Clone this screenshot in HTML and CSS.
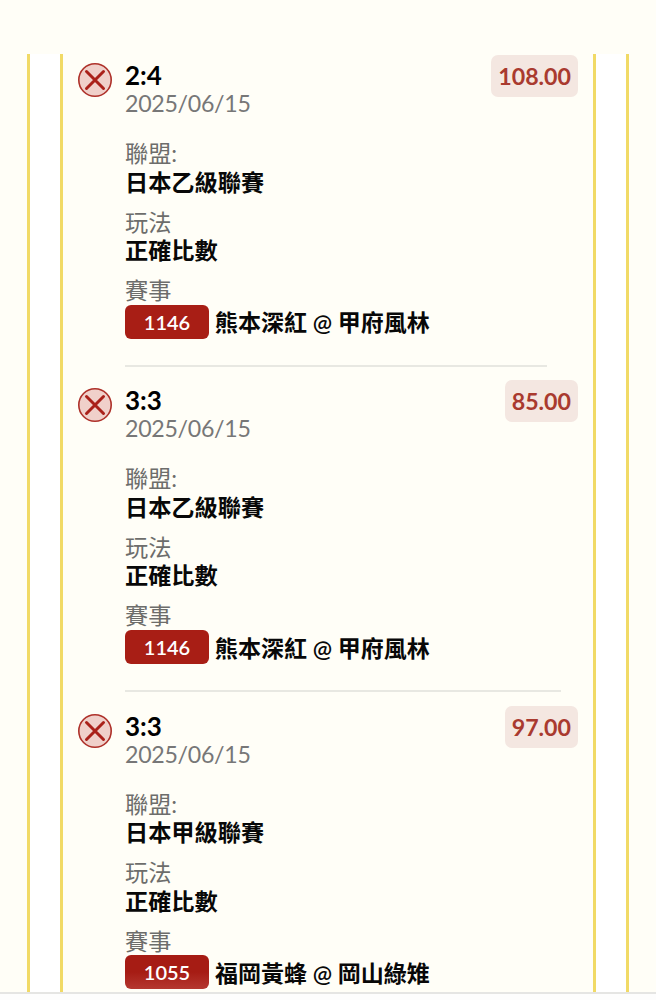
FILE: index.html
```
<!DOCTYPE html>
<html lang="zh-Hant">
<head>
    <meta charset="UTF-8">
    <meta name="viewport" content="width=device-width, initial-scale=1.0">
    <title>投注詳情</title>
    <link rel="stylesheet" href="styles.css">
</head>
<body>
    <div class="outer">
        <div class="inner">
            <div class="bet">
                <svg class="icon" viewBox="0 0 34 34"><circle cx="17" cy="17" r="16.2"/><path d="M8.5 8.5L25.5 25.5M25.5 8.5L8.5 25.5"/></svg>
                <div class="content">
                    <div class="score">2:4</div>
                    <div class="date">2025/06/15</div>
                    <div class="group">
                        <div class="label">聯盟:</div>
                        <div class="value">日本乙級聯賽</div>
                    </div>
                    <div class="group">
                        <div class="label">玩法</div>
                        <div class="value">正確比數</div>
                    </div>
                    <div class="group">
                        <div class="label">賽事</div>
                        <div class="match"><span class="tag">1146</span><span class="teams">熊本深紅 @ 甲府風林</span></div>
                    </div>
                    <div class="divider"></div>
                </div>
                <div class="odds">108.00</div>
            </div>
            <div class="bet">
                <svg class="icon" viewBox="0 0 34 34"><circle cx="17" cy="17" r="16.2"/><path d="M8.5 8.5L25.5 25.5M25.5 8.5L8.5 25.5"/></svg>
                <div class="content">
                    <div class="score">3:3</div>
                    <div class="date">2025/06/15</div>
                    <div class="group">
                        <div class="label">聯盟:</div>
                        <div class="value">日本乙級聯賽</div>
                    </div>
                    <div class="group">
                        <div class="label">玩法</div>
                        <div class="value">正確比數</div>
                    </div>
                    <div class="group">
                        <div class="label">賽事</div>
                        <div class="match"><span class="tag">1146</span><span class="teams">熊本深紅 @ 甲府風林</span></div>
                    </div>
                    <div class="divider"></div>
                </div>
                <div class="odds">85.00</div>
            </div>
            <div class="bet">
                <svg class="icon" viewBox="0 0 34 34"><circle cx="17" cy="17" r="16.2"/><path d="M8.5 8.5L25.5 25.5M25.5 8.5L8.5 25.5"/></svg>
                <div class="content">
                    <div class="score">3:3</div>
                    <div class="date">2025/06/15</div>
                    <div class="group">
                        <div class="label">聯盟:</div>
                        <div class="value">日本甲級聯賽</div>
                    </div>
                    <div class="group">
                        <div class="label">玩法</div>
                        <div class="value">正確比數</div>
                    </div>
                    <div class="group">
                        <div class="label">賽事</div>
                        <div class="match"><span class="tag tag-fade">1055</span><span class="teams">福岡黃蜂 @ 岡山綠雉</span></div>
                    </div>
                </div>
                <div class="odds">97.00</div>
            </div>
        </div>
    </div>
    <div class="bottom-bar"></div>
</body>
</html>
```
FILE: styles.css
```
* {
    box-sizing: border-box;
}
body {
    margin: 0;
    height: 1000px;
    padding-top: 54px;
    display: flex;
    flex-direction: column;
    overflow: hidden;
    background: #fffef7;
    color: #0c0c0c;
    font-family: Lato, "Noto Sans CJK TC", sans-serif;
    font-size: 23px;
    line-height: 28.5px;
}
.outer {
    height: 938px;
    flex: none;
    margin: 0 27px;
    padding: 0 30px;
    border: solid #f1da66;
    border-width: 0 3px;
    background: #fff;
}
.inner {
    height: 100%;
    padding: 1px 15px 0;
    border: solid #f1da66;
    border-width: 0 3px;
    background: #fffef7;
    overflow: hidden;
}
.bet {
    display: flex;
    align-items: flex-start;
    height: 325.4px;
}
.icon {
    flex: none;
    width: 34px;
    height: 34px;
    margin: 8px 13px 0 0;
}
.icon circle {
    fill: #f0d0ca;
    stroke: #ae3029;
    stroke-width: 1.6;
}
.icon path {
    stroke: #aa211a;
    stroke-width: 3;
    stroke-linecap: round;
}
.content {
    flex: 1;
    padding-top: 6px;
}
.score {
    font-size: 26px;
    font-weight: 700;
    line-height: 29px;
    color: #000;
}
.date {
    line-height: 27px;
    font-size: 23.2px;
    letter-spacing: -0.3px;
    color: #777;
    margin-bottom: 22px;
}
.group {
    margin-bottom: 11.5px;
}
.label {
    font-size: 23.2px;
    color: #6d6d6b;
}
.value,
.teams {
    font-weight: 600;
    color: #080808;
}
.value {
    font-size: 23.2px;
}
.match {
    display: flex;
    align-items: center;
    height: 34px;
}
.teams {
    padding-top: 2px;
}
.tag {
    width: 84px;
    height: 34px;
    margin-right: 6px;
    border-radius: 6px;
    background: #a81e15;
    color: #fff;
    font-size: 20px;
    font-weight: 600;
    line-height: 34px;
    text-align: center;
}
.tag-fade {
    background: linear-gradient(#a61c14 50%, #b53730);
}
.divider {
    height: 2px;
    margin: 26px -56px 0 0;
    background: #e8e8e2;
}
.odds {
    flex: none;
    height: 42px;
    padding: 0 7px;
    border-radius: 7px;
    background: #f4e7e1;
    color: #a93a2f;
    font-weight: 700;
    font-size: 23.2px;
    line-height: 43px;
}
.bottom-bar {
    flex: none;
    height: 8px;
    border-top: 2px solid #e5e5e3;
    background: #fdfdfd;
}
```
